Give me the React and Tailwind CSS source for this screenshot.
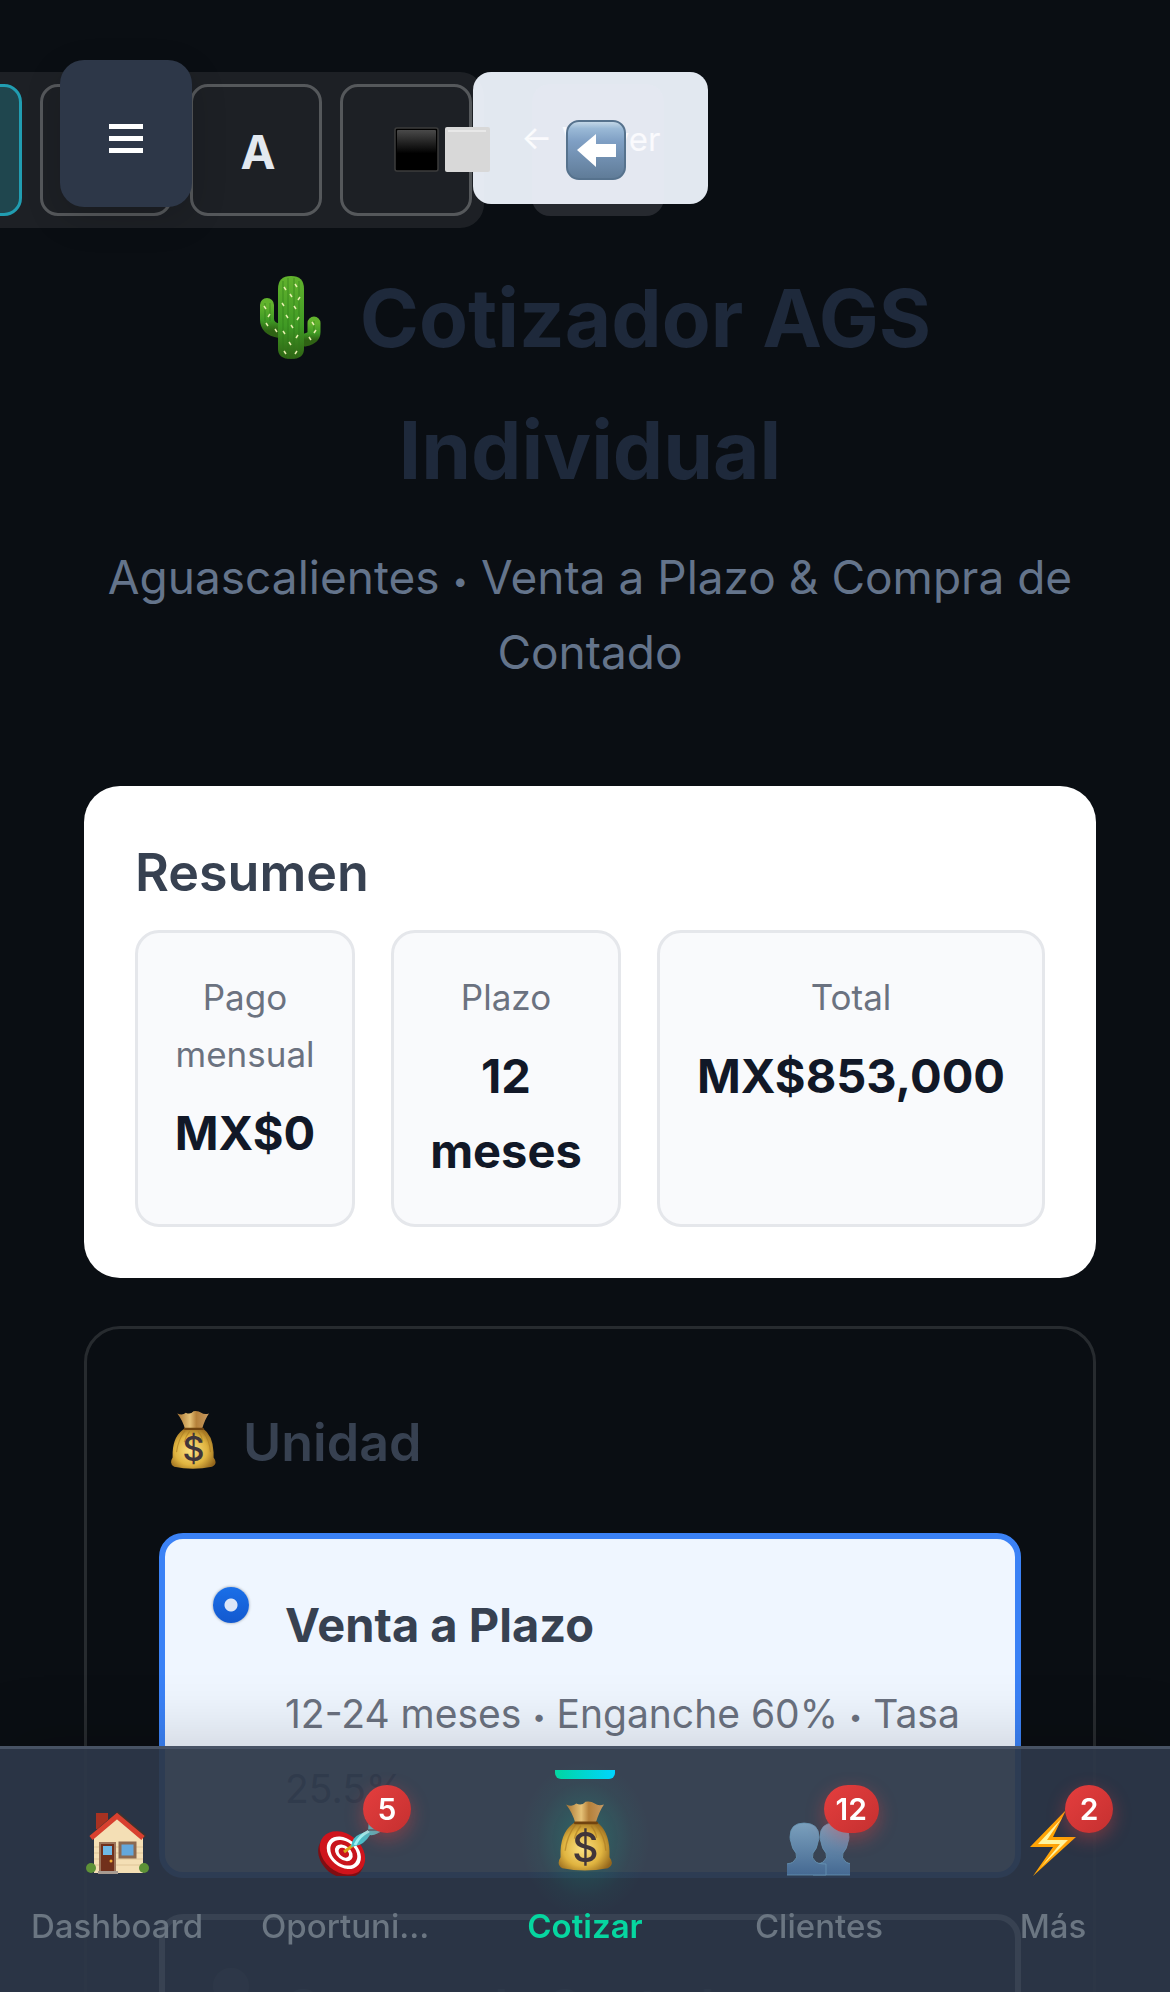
import React from "react";

function Cactus() {
  return (
    <svg viewBox="0 0 84 84" className="mr-2 inline-block h-[84px] w-[84px] align-[-12px]" aria-hidden="true">
      <defs>
        <linearGradient id="cactus" x1="0" x2="0" y1="0" y2="1">
          <stop offset="0" stopColor="#62b32d" />
          <stop offset=".6" stopColor="#3f9a24" />
          <stop offset="1" stopColor="#2f6314" />
        </linearGradient>
      </defs>
      <g fill="none" stroke="url(#cactus)" strokeLinecap="round" strokeLinejoin="round">
        <path d="M18 30v14q0 10 13 12" strokeWidth="14" />
        <path d="M65 48v9q0 6-9 8" strokeWidth="13" />
      </g>
      <path d="M29 14q0-13 13-13t13 13v60q0 10-13 10t-13-10z" fill="url(#cactus)" />
      <path d="M34 6v76M39 3v81M45 3v81M50 6v76M16 28v18M21 28v18M65 46v10" stroke="#2c7817" strokeWidth="1.2" fill="none" opacity=".5" />
      <path d="M35 12l2 3M46 9l2 3M41 19l2 3M51 22l-2 3M33 28l2 3M45 31l2 3M37 40l2 3M50 42l-2 3M42 50l2 3M34 56l2 3M49 60l-2 3M40 67l2 3M35 76l2 3M48 76l-2 3M15 31l2 3M21 39l-2 3M17 48l2 3M26 54l2 3M63 47l2 3M67 55l-2 3M60 62l2 3" stroke="#e9efb0" strokeWidth="1.5" />
    </svg>
  );
}

function MoneyBag({ className }) {
  return (
    <svg viewBox="0 0 66 80" className={className} aria-hidden="true">
      <defs>
        <radialGradient id="bag" cx=".45" cy=".55" r=".6">
          <stop offset="0" stopColor="#fbe184" />
          <stop offset=".6" stopColor="#e0b440" />
          <stop offset="1" stopColor="#94661c" />
        </radialGradient>
        <linearGradient id="bagTop" x1="0" x2="1">
          <stop offset="0" stopColor="#a97432" />
          <stop offset=".4" stopColor="#e6c277" />
          <stop offset=".6" stopColor="#b5803a" />
          <stop offset="1" stopColor="#c79a62" />
        </linearGradient>
      </defs>
      <path d="M12 7q7 3 11-1q6 3 10-2q6-1 10 2q4 3 10 1q-5 7-9 20H22Q19 16 12 7z" fill="url(#bagTop)" />
      <path d="M22 26h23q13 9 14 31v7q6 8-2 12q-25 5-49 0q-7-4-2-12v-7q1-22 16-31z" fill="url(#bag)" />
      <path d="M22 29q-9 12-11 28M44 29q10 12 11 28M28 30q-5 6-7 14M39 30q5 6 6 13" stroke="#a97820" strokeWidth="1.5" fill="none" opacity=".6" />
      <path d="M22 27h23" stroke="#70430f" strokeWidth="3" strokeLinecap="round" />
      <text x="33" y="69" textAnchor="middle" fontFamily="Inter, sans-serif" fontSize="44" fontWeight="500" fill="#40353a">$</text>
    </svg>
  );
}

function House() {
  return (
    <svg viewBox="0 0 66 66" className="h-[66px] w-[66px]" aria-hidden="true">
      <path d="M12 3h12v16H12z" fill="#a83222" />
      <path d="M33 8L59 28V63H10V28z" fill="#f4dfb5" />
      <path d="M10 37h49M10 43h49M10 49h49M10 55h49" stroke="#dfc598" strokeWidth="1" />
      <path d="M7 27L34 4L61 27" fill="none" stroke="#41332e" strokeWidth="4" />
      <path d="M7 28L33 6L59 28" fill="none" stroke="#d8402f" strokeWidth="5" />
      <path d="M16 33h15v29H16z" fill="#71301b" stroke="#9b745a" strokeWidth="2" />
      <path d="M19 36h9v9h-9z" fill="#6fb9e6" />
      <circle cx="27" cy="51" r="1.5" fill="#f1ad38" />
      <path d="M36 33h15v14H36z" fill="#64a8dc" stroke="#8b6950" strokeWidth="3" />
      <path d="M14 61h20v3H14z" fill="#a89b91" />
      <circle cx="7" cy="58" r="5" fill="#5d9137" />
      <circle cx="60" cy="58" r="5" fill="#5d9137" />
    </svg>
  );
}

function Target() {
  return (
    <svg viewBox="0 0 66 66" className="h-[66px] w-[66px]" aria-hidden="true">
      <g transform="rotate(40 23 43)">
        <ellipse cx="25" cy="45" rx="25" ry="20" fill="#7f0e13" />
        <ellipse cx="24" cy="42" rx="25" ry="19" fill="#cf141c" />
        <ellipse cx="25" cy="41" rx="19" ry="14" fill="#fff" />
        <ellipse cx="25" cy="41" rx="15" ry="11" fill="#c9141c" />
        <ellipse cx="25" cy="41" rx="10" ry="7" fill="#fff" />
        <ellipse cx="25" cy="41" rx="6" ry="4" fill="#c9141c" />
      </g>
      <path d="M26 42l12-9" stroke="#d9a518" strokeWidth="3" />
      <path d="M33 37q1-10 9-13l8-3l1-12l12-6l-5 12l8 4q-8 7-14 6q-6 10-15 11z" fill="#48bfca" />
      <path d="M37 35q4-9 14-14" stroke="#9cf3f4" strokeWidth="3" fill="none" />
      <path d="M50 20l14 0" stroke="#3a7c86" strokeWidth="2" />
    </svg>
  );
}

function People() {
  const body =
    "M20 13q-14 0-14 14q0 3 1 5q1 7 5 11q2 5-2 8q-2 3-11 3v11h43V54q-9 0-11-3q-4-3-2-8q4-4 5-11q1-2 1-5q0-14-15-14z";
  return (
    <svg viewBox="0 0 66 66" className="h-[66px] w-[66px]" aria-hidden="true">
      <defs>
        <linearGradient id="people" x1="0" x2="0" y1="0" y2="1">
          <stop offset="0" stopColor="#7ba0bd" />
          <stop offset="1" stopColor="#456992" />
        </linearGradient>
      </defs>
      <svg x="1" y="0" width="63" height="66" viewBox="1 0 63 66">
        <path d={body} fill="url(#people)" stroke="#6795b5" strokeWidth=".8" transform="translate(28 0)" />
        <path d={body} fill="url(#people)" stroke="#6795b5" strokeWidth=".8" transform="translate(-2 0)" />
      </svg>
    </svg>
  );
}

function Bolt() {
  return (
    <svg viewBox="0 0 66 66" className="h-[66px] w-[66px]" aria-hidden="true">
      <path d="M46 0L10 37h23L13 66L56 27H33z" fill="#ffa406" />
      <path d="M42 8L18 34h22L21 57L48 30H27z" fill="#fff6a0" />
    </svg>
  );
}

function BackArrow() {
  return (
    <svg viewBox="0 0 60 60" className="h-[60px] w-[60px]" aria-hidden="true">
      <defs>
        <linearGradient id="key" x1="0" x2="0" y1="0" y2="1">
          <stop offset="0" stopColor="#c9dbe9" />
          <stop offset=".13" stopColor="#9ab9d6" />
          <stop offset=".35" stopColor="#7f9fc4" />
          <stop offset="1" stopColor="#5f7b97" />
        </linearGradient>
      </defs>
      <rect x="1" y="1" width="58" height="58" rx="12" fill="url(#key)" stroke="#56728d" strokeWidth="2" />
      <path d="M11 30L30 14V24H50V37H30V47z" fill="#fff" />
    </svg>
  );
}

function ContrastSquares() {
  return (
    <svg viewBox="0 0 96 46" className="h-[46px] w-[96px] shrink-0" aria-hidden="true">
      <defs>
        <linearGradient id="ink" x1="0" x2="0" y1="0" y2="1">
          <stop offset="0" stopColor="#4a4a4a" />
          <stop offset=".6" stopColor="#000" />
        </linearGradient>
      </defs>
      <rect x="1" y="1" width="43" height="43" rx="2" fill="#000" stroke="#3c3c3c" strokeWidth="1.5" />
      <rect x="3" y="3" width="39" height="39" rx="1" fill="url(#ink)" />
      <rect x="51" y="0" width="45" height="45" rx="2" fill="#d8d8d8" />
      <path d="M54 4h38" stroke="#e8e8e8" strokeWidth="2" />
    </svg>
  );
}

const toolCell = "flex h-[132px] w-[132px] shrink-0 items-center rounded-[18px] border-3";

function TopBar() {
  return (
    <header className="relative flex pt-[72px]">
      <div className="relative z-10 -ml-[122px] flex gap-[18px] rounded-[24px] bg-white/8 p-3">
        <button aria-label="Tema" className={`${toolCell} border-[#219db1] bg-[#1f464e]`} />
        <button aria-label="Texto pequeño" className={`${toolCell} border-white/25`} />
        <button className={`${toolCell} justify-center border-white/25 pl-1 pt-1 text-[47px] font-bold text-[#e2e8f0]`}>A</button>
        <button aria-label="Contraste" className={`${toolCell} border-white/25 pl-[51px]`}>
          <ContrastSquares />
        </button>
      </div>
      <button className="-ml-[11px] h-[132px] rounded-[18px] bg-[#e2e8f0] px-12 pt-1 text-[33px] text-white/85">
        ← Volver
      </button>
      <button
        aria-label="Regresar"
        className="absolute left-[532px] top-[84px] z-20 flex h-[132px] w-[132px] items-center justify-center rounded-[18px] bg-[#f8f0ff]/12 pr-1"
      >
        <BackArrow />
      </button>
      <button
        aria-label="Menú"
        className="absolute left-[60px] top-[60px] z-20 flex h-[147px] w-[132px] items-center justify-center rounded-[24px] bg-[#2d3748] shadow-[0_12px_36px_rgba(0,0,0,0.15)]"
      >
        <svg viewBox="0 0 34 30" className="mt-[10px] h-[30px] w-[34px]" aria-hidden="true">
          <path d="M0 0h34v5H0zM0 12h34v5H0zM0 24h34v5H0z" fill="#fff" />
        </svg>
      </button>
    </header>
  );
}

/* Small separator dot, centred on the lowercase letters around it. */
function Dot() {
  return <span className="align-[3px] text-[0.6em] leading-none">•</span>;
}

function Stat({ label, value }) {
  return (
    <div className="rounded-[24px] border-3 border-[#e5e7eb] bg-[#f9fafc] p-9 text-center">
      <dt className="text-[35px] leading-[57px] text-[#6b7280]">{label}</dt>
      <dd className="-mx-3 mt-3 text-[47px] font-bold leading-[75px] text-[#111827]">{value}</dd>
    </div>
  );
}

function Option({ title, children, selected }) {
  return (
    <label
      className={
        selected
          ? "flex items-start gap-9 rounded-[24px] border-6 border-[#3b82f6] bg-[#eff6ff] px-12 pb-[46px] pt-12"
          : "flex items-start gap-9 rounded-[24px] border-6 border-[#e5e7eb] px-12 pb-[46px] pt-12"
      }
    >
      <input
        type="radio"
        name="modalidad"
        defaultChecked={selected}
        className="h-9 w-9 shrink-0 appearance-none rounded-full bg-white/20 checked:bg-[radial-gradient(circle,#dbe6f8_0_6px,transparent_7px),linear-gradient(#1a6fe8,#1359cf)] checked:shadow-[0_0_3px_rgba(0,0,0,0.4)]"
      />
      <span className="flex flex-col gap-[14px] leading-[75px]">
        <span className="text-[47px] font-bold text-[#374151]">{title}</span>
        <span className="text-[39px] text-[#6b7280]">{children}</span>
      </span>
    </label>
  );
}

const navItems = [
  { label: "Dashboard", icon: <House /> },
  { label: "Oportunidades", icon: <Target />, badge: 5 },
  { label: "Cotizar", icon: <MoneyBag className="-mt-4 h-[74px] w-[61px] shrink-0" />, active: true },
  { label: "Clientes", icon: <People />, badge: 12 },
  { label: "Más", icon: <Bolt />, badge: 2 },
];

function BottomNav() {
  return (
    <nav className="fixed inset-x-0 bottom-0 z-30 grid grid-cols-5 border-t-3 border-[#4a5568]/90 bg-[#2d3748]/94 shadow-[0_-12px_60px_rgba(0,0,0,0.14)]">
      {navItems.map((item) => (
        <a key={item.label} href="#" className="relative flex min-w-0 flex-col items-center gap-[26px] px-[27px] pb-[42px] pt-[61px]">
          {item.active && (
            <>
              <span className="absolute top-[21px] h-[9px] w-[60px] rounded-b-[6px] bg-gradient-to-r from-[#06d6a0] to-[#00d4ff]" />
              <span className="absolute top-[12px] h-[156px] w-[130px] bg-[radial-gradient(closest-side,rgba(6,214,160,0.24),rgba(6,214,160,0.03)_75%,transparent)]" />
            </>
          )}
          <span className="relative flex h-[66px] w-[66px] items-center justify-center">
            {item.icon}
            {item.badge && (
              <span className="absolute -right-[27px] -top-[25px] flex h-12 min-w-12 items-center justify-center rounded-full bg-gradient-to-br from-[#e53e3e] to-[#c53030] px-3 text-[30px] font-semibold text-white shadow-[0_6px_18px_rgba(229,62,62,0.4)]">
                {item.badge}
              </span>
            )}
          </span>
          <span
            className={
              item.active
                ? "relative max-w-full truncate text-[33px] font-semibold leading-[48px] text-[#06d6a0]"
                : "relative max-w-full truncate text-[33px] font-medium leading-[48px] text-[#6b7682]"
            }
          >
            {item.label}
          </span>
        </a>
      ))}
    </nav>
  );
}

export default function App() {
  return (
    <div className="h-screen overflow-hidden bg-[#0a0e13] font-[Inter,sans-serif]">
      <TopBar />
      <main className="pl-[84px] pr-[74px] pt-6">
        <div className="mb-24 text-center">
          <h1 className="text-[80px] font-bold leading-[132px] text-[#1e293b]">
            <Cactus /> Cotizador AGS Individual
          </h1>
          <p className="mt-6 text-[46px] leading-[75px] text-[#64748b]">
            Aguascalientes <Dot /> Venta a Plazo &amp; Compra de Contado
          </p>
        </div>

        <section className="mb-12 rounded-[36px] bg-white p-[51px]">
          <h2 className="mb-[21px] text-[52px] font-semibold leading-[72px] text-[#374151]">Resumen</h2>
          <dl className="grid grid-cols-[220fr_230fr_388fr] gap-9">
            <Stat label="Pago mensual" value="MX$0" />
            <Stat label="Plazo" value="12 meses" />
            <Stat label="Total" value="MX$853,000" />
          </dl>
        </section>

        <section className="rounded-[36px] border-3 border-white/12 p-[72px]">
          <h2 className="mb-12 flex items-center gap-6 pl-[9px] text-[52px] font-semibold leading-[84px] text-[#374151]">
            <MoneyBag className="mb-2 h-[62px] w-[51px]" />
            Unidad
          </h2>
          <div className="flex flex-col gap-9">
            <Option title="Venta a Plazo" selected>
              12-24 meses <Dot /> Enganche 60% <Dot /> Tasa 25.5%
            </Option>
            <Option title="Compra de Contado">Pago único</Option>
          </div>
        </section>
      </main>
      <BottomNav />
    </div>
  );
}
